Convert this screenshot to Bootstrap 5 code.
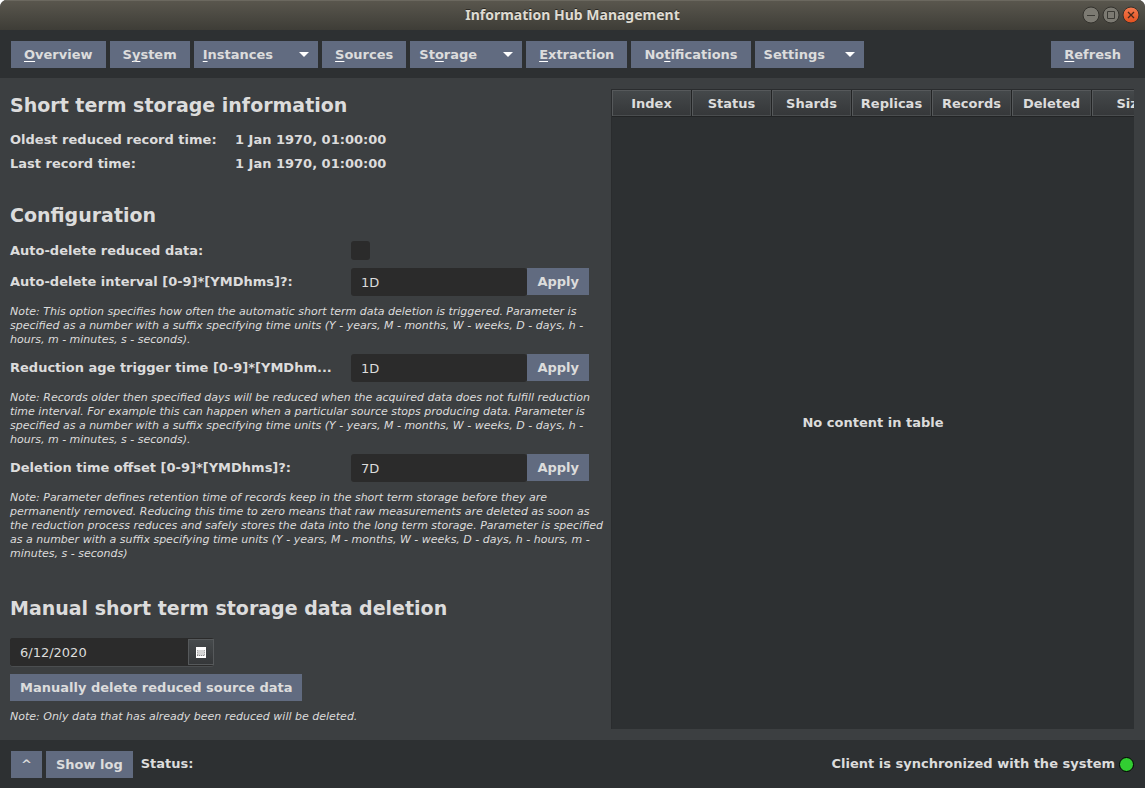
<!DOCTYPE html>
<html lang="en">
<head>
<meta charset="utf-8">
<meta name="viewport" content="width=device-width, initial-scale=1">
<title>Information Hub Management</title>
<link href="https://cdn.jsdelivr.net/npm/bootstrap@5.3.0/dist/css/bootstrap.min.css" rel="stylesheet">
<style>
  body { font: 13px/16px "DejaVu Sans", sans-serif; color: #dcdcdc; background: #fff; }
  .app-window { background: #3c3f41; border-radius: 7px 7px 0 0; overflow: hidden; }
  .title-bar { height: 30px; background: linear-gradient(#5a574e, #3e3d37); box-shadow: inset 0 1px #6b685f; color: #dfdbd2; padding: 0 5px 0 63px; }
  .title-bar h1 { font: 700 14px/20px "Noto Sans", sans-serif; text-shadow: 0 -1px #2a2925; }
  .win-controls { gap: 2px; }
  .win-controls button { width: 18px; height: 18px; }
  .win-controls svg { display: block; }
  .tool-strip { background: #2d3032; padding: 11px; gap: 4px; height: 48px; }
  .btn-slate {
    --bs-btn-padding-x: 13px; --bs-btn-padding-y: 0;
    --bs-btn-font-size: 13px; --bs-btn-font-weight: 700; --bs-btn-line-height: 27px;
    --bs-btn-border-width: 0; --bs-btn-border-radius: 0;
    --bs-btn-color: #dcdcdc; --bs-btn-bg: #616b80;
    --bs-btn-hover-color: #fff; --bs-btn-hover-bg: #6d7890;
    --bs-btn-active-color: #fff; --bs-btn-active-bg: #535c70;
    height: 27px; white-space: nowrap;
  }
  .btn-snug { --bs-btn-padding-x: 10px; }
  .btn-slate u { text-decoration: underline 1px #fff; text-underline-offset: 2px; text-decoration-skip-ink: none; }
  .btn-drop { --bs-btn-padding-x: 9px; display: inline-flex; align-items: center; gap: 26px; }
  .btn-near { gap: 20px; }
  .btn-drop::after { margin: 0; border-top: 5px solid #fff; border-left: 5px solid transparent; border-right: 5px solid transparent; }
  .main-area { display: grid; grid-template-columns: 579fr 523fr; gap: 22px; padding: 11px 11px 11px 10px; }
  h2 { font-size: 19px; font-weight: 700; line-height: 22px; margin: 0; }
  .form-pane { padding-top: 5px; }
  .info-list { grid-template-columns: 217px 1fr; gap: 8px; font-weight: 700; }
  .info-list dt, .info-list dd { margin: 0; }
  .stack-8 { gap: 8px; }
  .config-group { margin-bottom: 37px; }
  .config-group h2 { margin-bottom: 7px; }
  .deletion-group h2 { margin-bottom: 11px; }
  .setting-row { gap: 10px; }
  .setting-row label { font-weight: 700; flex: 1 1 0; min-width: 0; }
  .setting-control { flex: 0 0 238px; }
  .field-dark, .field-dark:focus {
    background: #2b2b2b; color: #dcdcdc; border: 0; border-radius: 3px; box-shadow: none;
    font-size: 13px; line-height: 16px; padding: 6px 10px; height: 28px; min-height: 0;
  }
  .tick-dark.form-check-input { width: 19px; height: 19px; margin: 0; background-color: #2b2b2b; border: 0; border-radius: 3px; display: block; }
  .note { font-size: 11px; line-height: 14px; font-style: italic; margin: 1px -18px -1px 0; }
  .date-box { width: 204px; height: 28px; background: #2b2b2b; border-radius: 3px; box-shadow: 0 1px #4b4e50; }
  .btn-calendar { width: 26px; height: 26px; border: 1px solid #56595b; border-radius: 0; background: linear-gradient(#464a4c, #353739); }
  .table-pane { background: #2d3032; overflow: hidden; border-top: 1px solid #2a2c2e; border-left: 1px solid #2a2c2e; }
  .index-table { width: 560px; table-layout: fixed; border-collapse: separate; border-spacing: 0; }
  .index-table th {
    width: 80px; height: 27px; padding: 2px 0 0; text-align: center;
    background: linear-gradient(#45494b, #353739);
    border-right: 1px solid #222425; border-bottom: 1px solid #222425;
    box-shadow: inset 1px 1px #56595b, inset -1px -1px #4a4d4f;
  }
  .status-strip { background: #2d3032; padding: 11px; height: 48px; gap: 4px; font-weight: 700; }
  .status-dot { width: 15px; height: 15px; background: #32cd32; border: 1px solid #000; }
</style>
</head>
<body>
<div class="app-window min-vh-100 d-flex flex-column">
  <header class="title-bar d-flex align-items-center">
    <h1 class="flex-fill text-center m-0">Information Hub Management</h1>
    <div class="win-controls d-flex">
      <button type="button" class="border-0 bg-transparent p-0" aria-label="Minimize">
        <svg width="18" height="18" viewBox="0 0 18 18"><circle cx="9" cy="9" r="8" fill="#7c7a72" stroke="#33322d"/><path d="M5 9.500h8" stroke="#3b3a35"/></svg>
      </button>
      <button type="button" class="border-0 bg-transparent p-0" aria-label="Maximize">
        <svg width="18" height="18" viewBox="0 0 18 18"><circle cx="9" cy="9" r="8" fill="#7c7a72" stroke="#33322d"/><path d="M5.500 5.500h7v7h-7z" fill="none" stroke="#3b3a35"/></svg>
      </button>
      <button type="button" class="border-0 bg-transparent p-0" aria-label="Close">
        <svg width="18" height="18" viewBox="0 0 18 18"><defs><linearGradient id="closeFill" x2="0" y2="1"><stop stop-color="#f47b50"/><stop offset="1" stop-color="#e2501e"/></linearGradient></defs><circle cx="9" cy="9" r="8" fill="url(#closeFill)" stroke="#33322d"/><path d="M6 6l6 6M12 6l-6 6" stroke="#45281b" stroke-width="1.300"/></svg>
      </button>
    </div>
  </header>

  <nav class="tool-strip d-flex" aria-label="Main">
    <button type="button" class="btn btn-slate"><u>O</u>verview</button>
    <button type="button" class="btn btn-slate">S<u>y</u>stem</button>
    <button type="button" class="btn btn-slate btn-drop dropdown-toggle"><span><u>I</u>nstances</span></button>
    <button type="button" class="btn btn-slate"><u>S</u>ources</button>
    <button type="button" class="btn btn-slate btn-drop dropdown-toggle"><span>St<u>o</u>rage</span></button>
    <button type="button" class="btn btn-slate"><u>E</u>xtraction</button>
    <button type="button" class="btn btn-slate">No<u>t</u>ifications</button>
    <button type="button" class="btn btn-slate btn-drop btn-near dropdown-toggle"><span>Settings</span></button>
    <button type="button" class="btn btn-slate ms-auto"><u>R</u>efresh</button>
  </nav>

  <main class="main-area flex-fill">
    <div class="form-pane">
      <section class="mb-4 pb-2">
        <h2 class="mb-3">Short term storage information</h2>
        <dl class="info-list d-grid m-0">
          <dt>Oldest reduced record time:</dt><dd>1 Jan 1970, 01:00:00</dd>
          <dt>Last record time:</dt><dd>1 Jan 1970, 01:00:00</dd>
        </dl>
      </section>

      <section class="config-group d-flex flex-column stack-8">
        <h2>Configuration</h2>
        <div class="setting-row d-flex align-items-center">
          <label for="autoDelete">Auto-delete reduced data:</label>
          <div class="setting-control"><input type="checkbox" class="form-check-input tick-dark" id="autoDelete"></div>
        </div>
        <div class="setting-row d-flex align-items-center">
          <label class="text-truncate" for="interval">Auto-delete interval [0-9]*[YMDhms]?:</label>
          <div class="setting-control d-flex"><input type="text" class="form-control field-dark" id="interval" value="1D"><button type="button" class="btn btn-slate btn-snug">Apply</button></div>
        </div>
        <p class="note">Note: This option specifies how often the automatic short term data deletion is triggered. Parameter is specified as a number with a suffix specifying time units (Y - years, M - months, W - weeks, D - days, h - hours, m - minutes, s - seconds).</p>
        <div class="setting-row d-flex align-items-center">
          <label for="ageTrigger">Reduction age trigger time [0-9]*[YMDhm...</label>
          <div class="setting-control d-flex"><input type="text" class="form-control field-dark" id="ageTrigger" value="1D"><button type="button" class="btn btn-slate btn-snug">Apply</button></div>
        </div>
        <p class="note">Note: Records older then specified days will be reduced when the acquired data does not fulfill reduction time interval. For example this can happen when a particular source stops producing data. Parameter is specified as a number with a suffix specifying time units (Y - years, M - months, W - weeks, D - days, h - hours, m - minutes, s - seconds).</p>
        <div class="setting-row d-flex align-items-center">
          <label class="text-truncate" for="offset">Deletion time offset [0-9]*[YMDhms]?:</label>
          <div class="setting-control d-flex"><input type="text" class="form-control field-dark" id="offset" value="7D"><button type="button" class="btn btn-slate btn-snug">Apply</button></div>
        </div>
        <p class="note">Note: Parameter defines retention time of records keep in the short term storage before they are permanently removed. Reducing this time to zero means that raw measurements are deleted as soon as the reduction process reduces and safely stores the data into the long term storage. Parameter is specified as a number with a suffix specifying time units (Y - years, M - months, W - weeks, D - days, h - hours, m - minutes, s - seconds)</p>
      </section>

      <section class="deletion-group d-flex flex-column align-items-start stack-8">
        <h2><label for="deleteDate">Manual short term storage data deletion</label></h2>
        <div class="date-box d-flex align-items-center">
          <input type="text" class="form-control field-dark" id="deleteDate" value="6/12/2020">
          <button type="button" class="btn-calendar flex-shrink-0 d-flex align-items-center justify-content-center p-0" aria-label="Choose date">
            <svg width="10" height="11" viewBox="0 0 10 11"><path d="M0 0h10v11H0z" fill="#fff"/><path d="M1 3h8v6H1z" fill="#d4d4d4"/><path d="M1 8.500h8" stroke="#8a8a8a" stroke-dasharray="1 1"/><path d="M1.500 3v6M8.500 3v6" stroke="#aaa" stroke-dasharray="1 1"/></svg>
          </button>
        </div>
        <button type="button" class="btn btn-slate btn-snug">Manually delete reduced source data</button>
        <p class="note">Note: Only data that has already been reduced will be deleted.</p>
      </section>
    </div>

    <section class="table-pane d-flex flex-column">
      <table class="index-table">
        <thead><tr><th scope="col">Index</th><th scope="col">Status</th><th scope="col">Shards</th><th scope="col">Replicas</th><th scope="col">Records</th><th scope="col">Deleted</th><th scope="col">Size</th></tr></thead>
      </table>
      <div class="flex-fill d-flex align-items-center justify-content-center fw-bold">No content in table</div>
    </section>
  </main>

  <footer class="status-strip d-flex align-items-center">
    <button type="button" class="btn btn-slate btn-snug" aria-label="Expand">^</button>
    <button type="button" class="btn btn-slate btn-snug">Show log</button>
    <span class="ps-1">Status:</span>
    <span class="ms-auto">Client is synchronized with the system</span>
    <span class="status-dot rounded-circle"></span>
  </footer>
</div>
<script src="https://cdn.jsdelivr.net/npm/bootstrap@5.3.0/dist/js/bootstrap.bundle.min.js"></script>
</body>
</html>
